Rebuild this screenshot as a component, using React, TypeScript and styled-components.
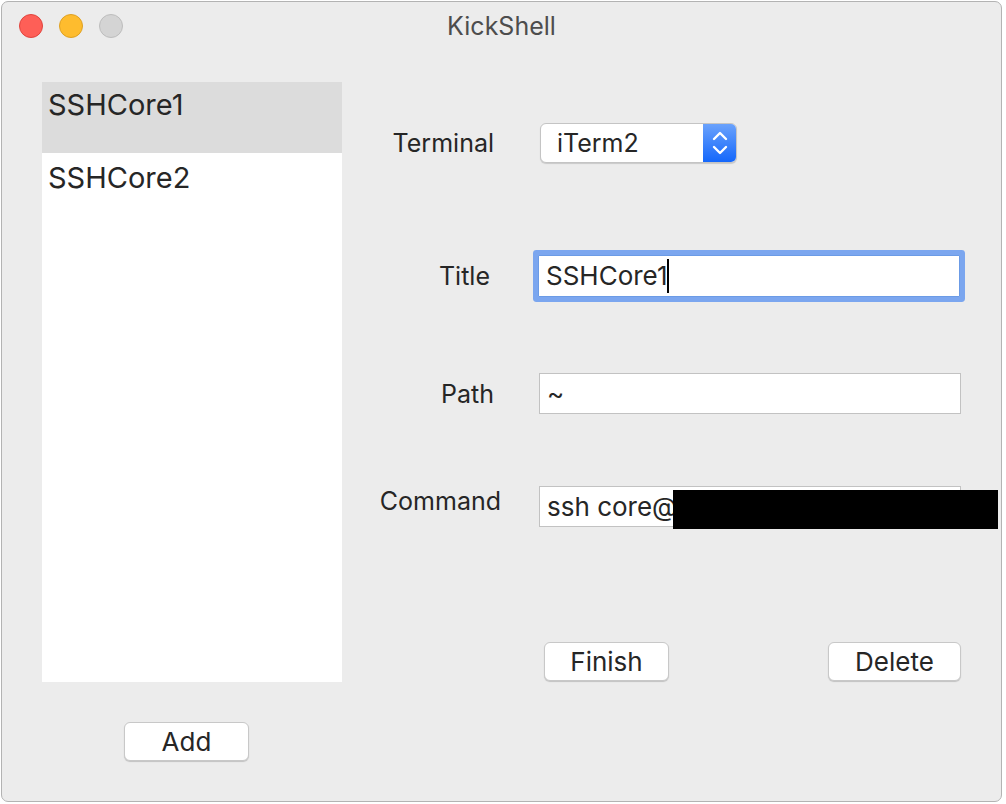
import React from "react";
import styled, { createGlobalStyle } from "styled-components";

const Global = createGlobalStyle`
  html, body { margin: 0; padding: 0; background: #ffffff; }
  body { font-family: Inter, "Noto Sans", sans-serif; color: #262626; }
  * { box-sizing: border-box; }
`;

const Window = styled.div`
  margin: 1px 0 0 1px;
  width: 1001px;
  height: 801px;
  background: #ececec;
  border: 1px solid #b3b3b3;
  border-radius: 7px;
  display: flex;
  flex-direction: column;
  overflow: hidden;
`;

const TitleBar = styled.div`
  height: 47px;
  display: grid;
  grid-template-columns: 1fr auto 1fr;
  align-items: center;
`;

const Lights = styled.div`
  display: flex;
  gap: 16px;
  padding-left: 17px;
`;

const Light = styled.span<{ $c: string; $b: string }>`
  width: 24px;
  height: 24px;
  border-radius: 50%;
  background: ${(p) => p.$c};
  border: 1px solid ${(p) => p.$b};
`;

const Title = styled.div`
  font-size: 25px;
  color: #4d4d4d;
  padding-top: 1px;
`;

const Body = styled.div`
  flex: 1;
  display: flex;
`;

const LeftCol = styled.div`
  width: 340px;
  padding: 33px 0 0 40px;
  display: flex;
  flex-direction: column;
`;

const List = styled.div`
  width: 300px;
  height: 600px;
  background: #ffffff;
  display: flex;
  flex-direction: column;
`;

const ListRow = styled.div<{ $sel?: boolean }>`
  height: 71px;
  padding: 3px 0 0 6px;
  font-size: 29px;
  line-height: 40px;
  background: ${(p) => (p.$sel ? "#dcdcdc" : "transparent")};
  & + & {
    padding-top: 5px;
  }
`;

const AddWrap = styled.div`
  margin-top: 40px;
  width: 300px;
  display: flex;
  justify-content: flex-start;
  padding-left: 82px;
`;

const Button = styled.button<{ $w: number }>`
  width: ${(p) => p.$w}px;
  height: 39px;
  background: #ffffff;
  border: 1px solid #c8c8c8;
  border-radius: 6px;
  box-shadow: 0 1px 1px rgba(0, 0, 0, 0.18);
  font-family: Inter, "Noto Sans", sans-serif;
  font-size: 26px;
  color: #262626;
  padding: 0;
`;

const Form = styled.div`
  flex: 1;
  display: flex;
  flex-direction: column;
`;

const Row = styled.div<{ $top: number; $h: number }>`
  margin-top: ${(p) => p.$top}px;
  height: ${(p) => p.$h}px;
  display: flex;
  align-items: center;
`;

const Label = styled.div<{ $shift?: number; $dy?: number }>`
  width: 152px;
  text-align: right;
  font-size: 25px;
  margin-right: ${(p) => 46 - (p.$shift || 0)}px;
  margin-left: ${(p) => p.$shift || 0}px;
  transform: translateY(${(p) => p.$dy || 0}px);
`;

const Popup = styled.div`
  width: 197px;
  height: 40px;
  display: flex;
  background: #ffffff;
  border: 1px solid #c4c4c4;
  border-radius: 6px;
  box-shadow: 0 1px 1px rgba(0, 0, 0, 0.15);
  overflow: hidden;
`;

const PopupText = styled.div`
  flex: 1;
  font-size: 25px;
  padding-left: 16px;
  display: flex;
  align-items: center;
`;

const PopupArrow = styled.div`
  width: 33px;
  background: linear-gradient(#6aa2fc, #1467fb);
  display: flex;
  align-items: center;
  justify-content: center;
`;

const Field = styled.div<{ $focus?: boolean }>`
  width: 422px;
  height: ${(p) => (p.$focus ? 42 : 41)}px;
  margin-left: ${(p) => (p.$focus ? -2 : -1)}px;
  background: #ffffff;
  border: 1px solid ${(p) => (p.$focus ? "#6b9be6" : "#c2c2c2")};
  box-shadow: ${(p) => (p.$focus ? "0 0 0 5px #7ba6ef" : "none")};
  border-radius: ${(p) => (p.$focus ? "1px" : "0")};
  font-size: 26px;
  padding-left: 7px;
  display: flex;
  align-items: center;
  position: relative;
`;

const Caret = styled.span`
  display: inline-block;
  width: 2px;
  height: 34px;
  background: #000;
`;

const Redact = styled.div`
  position: absolute;
  left: 133px;
  top: 3px;
  width: 325px;
  height: 39px;
  background: #000;
`;

const Buttons = styled.div`
  margin-top: 115px;
  display: flex;
  justify-content: space-between;
  width: 417px;
  margin-left: 202px;
`;

function Chevrons() {
  return (
    <svg width="18" height="28" viewBox="0 0 18 28" fill="none" stroke="#fff" strokeWidth="2.4" strokeLinecap="round" strokeLinejoin="round">
      <path d="M3 10 L9 4 L15 10" />
      <path d="M3 18 L9 24 L15 18" />
    </svg>
  );
}

export default function App() {
  return (
    <>
      <Global />
      <Window>
        <TitleBar>
          <Lights>
            <Light $c="#fe5f57" $b="#e0443e" />
            <Light $c="#febc2e" $b="#dea123" />
            <Light $c="#d4d4d4" $b="#bdbdbd" />
          </Lights>
          <Title>KickShell</Title>
          <div />
        </TitleBar>
        <Body>
          <LeftCol>
            <List>
              <ListRow $sel>SSHCore1</ListRow>
              <ListRow>SSHCore2</ListRow>
            </List>
            <AddWrap>
              <Button $w={125}>Add</Button>
            </AddWrap>
          </LeftCol>
          <Form>
            <Row $top={74} $h={40}>
              <Label>Terminal</Label>
              <Popup>
                <PopupText>iTerm2</PopupText>
                <PopupArrow>
                  <Chevrons />
                </PopupArrow>
              </Popup>
            </Row>
            <Row $top={86} $h={53}>
              <Label $shift={-4}>Title</Label>
              <Field $focus>
                SSHCore1
                <Caret />
              </Field>
            </Row>
            <Row $top={71} $h={41}>
              <Label>Path</Label>
              <Field>~</Field>
            </Row>
            <Row $top={71} $h={42}>
              <Label $shift={7} $dy={-5}>Command</Label>
              <Field>
                ssh core@
                <Redact />
              </Field>
            </Row>
            <Buttons>
              <Button $w={125}>Finish</Button>
              <Button $w={133}>Delete</Button>
            </Buttons>
          </Form>
        </Body>
      </Window>
    </>
  );
}
